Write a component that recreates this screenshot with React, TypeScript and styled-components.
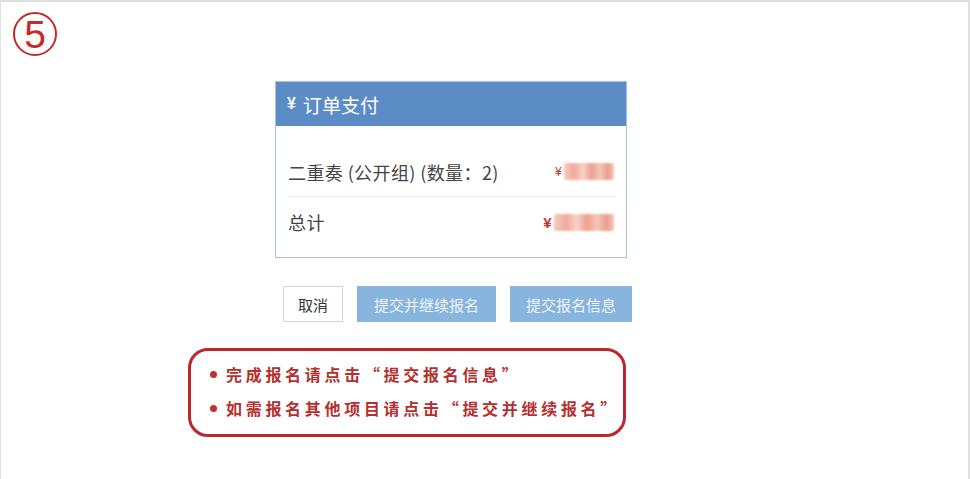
import React from "react";
import styled, { createGlobalStyle } from "styled-components";

const Global = createGlobalStyle`
  html, body { margin: 0; padding: 0; background: #ffffff; }
  body { font-family: "Noto Sans CJK SC", "Noto Sans", sans-serif; }
`;

const Frame = styled.div`
  width: 970px;
  height: 479px;
  box-sizing: border-box;
  border-top: 2px solid #dedede;
  border-left: 1px solid #e2e2e2;
  border-right: 2px solid #e0e0e0;
  background: #ffffff;
  overflow: hidden;
  display: flex;
  flex-direction: column;
`;

const StepBar = styled.div`
  padding: 10px 0 0 12px;
  display: flex;
`;

const StepBadge = styled.div`
  width: 44px;
  height: 44px;
  box-sizing: border-box;
  border: 2.5px solid #c42a27;
  border-radius: 50%;
  display: flex;
  align-items: center;
  justify-content: center;
  color: #c42a27;
  font-family: "Liberation Sans", Arial, sans-serif;
  font-size: 39px;
  line-height: 1;
  padding-top: 1px;
`;

const Main = styled.div`
  padding-left: 187px;
  display: flex;
  flex-direction: column;
  align-items: flex-start;
`;

const Card = styled.div`
  margin: 25px 0 0 87px;
  width: 352px;
  box-sizing: border-box;
  border: 1px solid #a9c2dc;
  background: #fff;
`;

const CardHeader = styled.div`
  height: 44px;
  background: #5c8cc6;
  display: flex;
  align-items: center;
  padding-left: 11px;
  color: #ffffff;
  font-size: 19px;
  gap: 7px;
`;

const YenMark = styled.span`
  font-family: "Liberation Sans", Arial, sans-serif;
  font-weight: 700;
  font-size: 16px;
  color: #f4f7fb;
`;

const CardBody = styled.div`
  padding: 21px 12px 10px 12px;
`;

const Row = styled.div<{ $last?: boolean }>`
  height: 50px;
  box-sizing: border-box;
  display: flex;
  align-items: center;
  justify-content: space-between;
  border-bottom: ${(p) => (p.$last ? "none" : "1px solid #ececec")};
  color: #444;
  font-size: 18px;
  letter-spacing: 0.4px;
`;

const Price = styled.span<{ $bold?: boolean }>`
  display: flex;
  align-items: center;
  gap: 2px;
  color: #c0392b;
  font-family: "Liberation Sans", Arial, sans-serif;
  font-size: ${(p) => (p.$bold ? "15px" : "12px")};
  font-weight: ${(p) => (p.$bold ? 700 : 400)};
`;

const Blur = styled.span<{ $w: number }>`
  display: inline-block;
  width: ${(p) => p.$w}px;
  height: 17px;
  background: linear-gradient(
    90deg,
    #f5cbbf 0%,
    #efab9c 20%,
    #f7d3c8 38%,
    #eda08f 55%,
    #f5c6b8 72%,
    #ec9c8b 88%,
    #f6c9bc 100%
  );
  filter: blur(1.2px);
  border-radius: 2px;
`;

const Actions = styled.div`
  margin: 28px 0 0 95px;
  display: flex;
  gap: 14px;
`;

const Button = styled.button<{ $primary?: boolean; $w: number }>`
  width: ${(p) => p.$w}px;
  height: 36px;
  box-sizing: border-box;
  padding: 0;
  border: 1px solid ${(p) => (p.$primary ? "#88b5dd" : "#d4d4d4")};
  background: ${(p) => (p.$primary ? "#88b5dd" : "#ffffff")};
  color: ${(p) => (p.$primary ? "#eef4fb" : "#333333")};
  font-family: "Noto Sans CJK SC", sans-serif;
  font-size: 15px;
  cursor: pointer;
`;

const Notice = styled.div`
  margin-top: 26px;
  width: 438px;
  height: 89px;
  box-sizing: border-box;
  border: 3px solid #b9282d;
  border-radius: 20px;
  padding: 6px 0 0 19px;
  display: flex;
  flex-direction: column;
`;

const NoticeLine = styled.div`
  height: 34px;
  display: flex;
  align-items: center;
  gap: 9px;
  color: #b3302f;
  font-size: 16px;
  font-weight: 700;
  letter-spacing: 3.7px;
  white-space: nowrap;
`;

const Dot = styled.span`
  width: 7px;
  height: 7px;
  border-radius: 50%;
  background: #c0302f;
  flex: none;
`;

export default function App() {
  return (
    <>
      <Global />
      <Frame>
        <StepBar>
          <StepBadge>5</StepBadge>
        </StepBar>
        <Main>
          <Card>
            <CardHeader>
              <YenMark>¥</YenMark>
              <span>订单支付</span>
            </CardHeader>
            <CardBody>
              <Row>
                <span>二重奏 (公开组) (数量：2)</span>
                <Price>
                  ¥<Blur $w={50} />
                </Price>
              </Row>
              <Row $last>
                <span>总计</span>
                <Price $bold>
                  ¥<Blur $w={60} />
                </Price>
              </Row>
            </CardBody>
          </Card>
          <Actions>
            <Button $w={60}>取消</Button>
            <Button $primary $w={139}>提交并继续报名</Button>
            <Button $primary $w={122}>提交报名信息</Button>
          </Actions>
          <Notice>
            <NoticeLine>
              <Dot />
              完成报名请点击“提交报名信息”
            </NoticeLine>
            <NoticeLine>
              <Dot />
              如需报名其他项目请点击“提交并继续报名”
            </NoticeLine>
          </Notice>
        </Main>
      </Frame>
    </>
  );
}
